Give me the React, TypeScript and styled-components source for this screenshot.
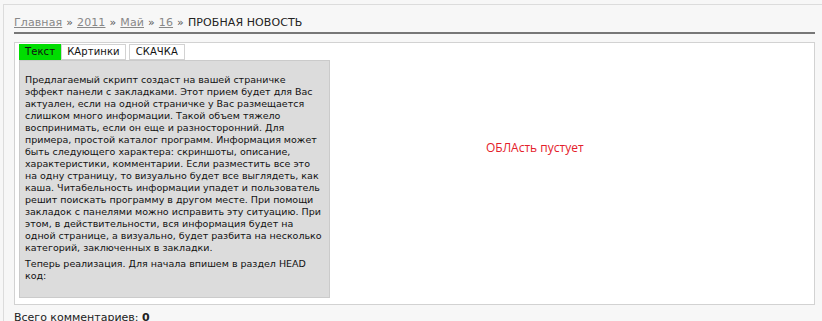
import React, { useState } from 'react';
import styled, { createGlobalStyle } from 'styled-components';

const GlobalStyle = createGlobalStyle`
  html, body {
    margin: 0;
    padding: 0;
    background: #f7f7f7;
  }
  body {
    font-family: "DejaVu Sans", Verdana, sans-serif;
    color: #222;
  }
`;

const Page = styled.div`
  margin: 4px 0 0 3px;
  border-top: 1px solid #dcdcdc;
  border-left: 1px solid #dcdcdc;
  padding: 0 7px 0 10px;
  height: 316px;
  overflow: hidden;
`;

const Crumbs = styled.div`
  font-size: 11px;
  line-height: 14px;
  padding: 11px 0 2px 0;
  border-bottom: 2px solid #777;
  color: #222;
  letter-spacing: 0.1px;
`;

const CrumbLink = styled.a`
  color: #888;
  text-decoration: underline;
`;

const Sep = styled.span`
  color: #555;
  margin: 0 4px;
`;

const Box = styled.div`
  margin-top: 8px;
  background: #fff;
  border: 1px solid #d2d2d2;
  height: 263px;
  display: flex;
  padding: 1px 4px 0 4px;
  box-sizing: border-box;
`;

const TabsCol = styled.div`
  display: flex;
  flex-direction: column;
  width: 311px;
`;

const TabRow = styled.div`
  display: flex;
`;

const Tab = styled.button<{ $active?: boolean; $gap?: boolean }>`
  font-family: "DejaVu Sans", Verdana, sans-serif;
  font-size: 10px;
  line-height: 12px;
  height: 16px;
  padding: 0 ${p => (p.$gap ? '6px' : '5px')};
  margin-left: ${p => (p.$gap ? '3px' : '0')};
  border: 1px solid ${p => (p.$active ? '#00dd00' : '#d2d2d2')};
  background: ${p => (p.$active ? '#00dd00' : '#fff')};
  color: #111;
  cursor: pointer;
  letter-spacing: 0.1px;
`;

const Panel = styled.div`
  background: #dcdcdc;
  border: 1px solid #cbcbcb;
  height: 238px;
  box-sizing: border-box;
  padding: 13px 5px 0 5px;
  font-size: 9.5px;
  line-height: 12px;
  color: #111;
`;

const Para = styled.p`
  margin: 0 0 4px 0;
`;

const Line = styled.span`
  display: block;
  white-space: nowrap;
`;

const Empty = styled.div`
  flex: 1;
  padding: 97px 0 0 156px;
  color: #e4202a;
  font-family: "Open Sans", "DejaVu Sans", sans-serif;
  font-size: 12px;
  line-height: 14px;
`;

const Footer = styled.div`
  font-size: 11px;
  padding-top: 6px;
  color: #222;
`;

const tabs = ['Текст', 'КАртинки', 'СКАЧКА'];

const first = [
  'Предлагаемый скрипт создаст на вашей страничке',
  'эффект панели с закладками. Этот прием будет для Вас',
  'актуален, если на одной страничке у Вас размещается',
  'слишком много информации. Такой объем тяжело',
  'воспринимать, если он еще и разносторонний. Для',
  'примера, простой каталог программ. Информация может',
  'быть следующего характера: скриншоты, описание,',
  'характеристики, комментарии. Если разместить все это',
  'на одну страницу, то визуально будет все выглядеть, как',
  'каша. Читабельность информации упадет и пользователь',
  'решит поискать программу в другом месте. При помощи',
  'закладок с панелями можно исправить эту ситуацию. При',
  'этом, в действительности, вся информация будет на',
  'одной странице, а визуально, будет разбита на несколько',
  'категорий, заключенных в закладки.',
];

const second = ['Теперь реализация. Для начала впишем в раздел HEAD', 'код:'];

export default function App() {
  const [active, setActive] = useState(0);
  return (
    <>
      <GlobalStyle />
      <Page>
        <Crumbs>
          <CrumbLink>Главная</CrumbLink>
          <Sep>»</Sep>
          <CrumbLink>2011</CrumbLink>
          <Sep>»</Sep>
          <CrumbLink>Май</CrumbLink>
          <Sep>»</Sep>
          <CrumbLink>16</CrumbLink>
          <Sep>»</Sep>
          ПРОБНАЯ НОВОСТЬ
        </Crumbs>
        <Box>
          <TabsCol>
            <TabRow>
              {tabs.map((t, i) => (
                <Tab key={t} $active={i === active} $gap={i === 2} onClick={() => setActive(i)}>
                  {t}
                </Tab>
              ))}
            </TabRow>
            <Panel>
              <Para>
                {first.map(l => (
                  <Line key={l}>{l}</Line>
                ))}
              </Para>
              <Para>
                {second.map(l => (
                  <Line key={l}>{l}</Line>
                ))}
              </Para>
            </Panel>
          </TabsCol>
          <Empty>ОБЛАсть пустует</Empty>
        </Box>
        <Footer>
          Всего комментариев: <b>0</b>
        </Footer>
      </Page>
    </>
  );
}
